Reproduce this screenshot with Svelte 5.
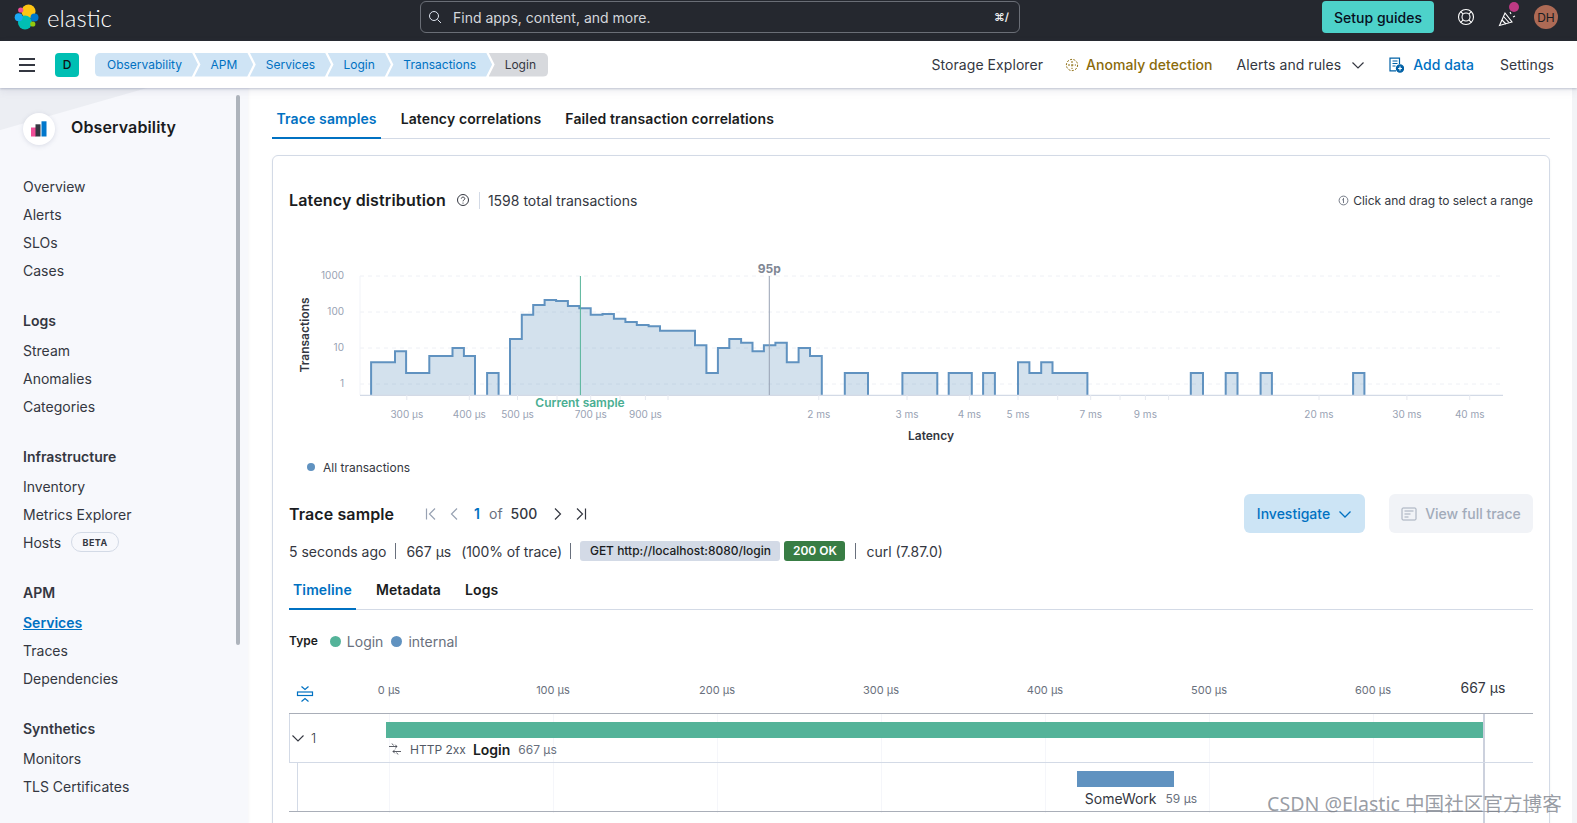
<script>
  const crumbs = ['Observability', 'APM', 'Services', 'Login', 'Transactions', 'Login'];
  const nav = [
    { items: ['Overview', 'Alerts', 'SLOs', 'Cases'] },
    { title: 'Logs', items: ['Stream', 'Anomalies', 'Categories'] },
    { title: 'Infrastructure', items: ['Inventory', 'Metrics Explorer', 'Hosts'] },
    { title: 'APM', items: ['Services', 'Traces', 'Dependencies'] },
    { title: 'Synthetics', items: ['Monitors', 'TLS Certificates'] }
  ];
  const BASE = 395.3;
  const lx = (p) => 280 + p / 2.8;
  const rx = (p) => 800 + p / 2.119;
  const yy = (p) => 250 + p / 3;
  const shape = (points, fx) => {
    let d = `M${fx(points[0][0]).toFixed(1)} ${BASE}`;
    for (let i = 0; i < points.length - 1; i++) {
      const y = yy(points[i][1]).toFixed(1);
      d += ` V${y} H${fx(points[i + 1][0]).toFixed(1)}`;
    }
    return d + ` V${BASE}`;
  };
  const blocks = [
    shape([[255,337],[322,304],[353,369],[418,318],[483,294],[515,318],[546,0]], lx),
    shape([[580,369],[612,0]], lx),
    shape([[644,267],[677,194],[709,165],[741,150],[773,153],[806,168],[838,175],[870,194],[903,192],[935,206],[967,216],[999,225],[1032,229],[1064,242],[1162,286],[1194,369],[1226,294],[1258,267],[1291,278],[1323,304],[1355,286],[1387,278],[1419,337],[1452,294],[1484,318],[1517,0]], lx),
    shape([[95,369],[144,0]], rx),
    shape([[217,369],[291,0]], rx),
    shape([[315,369],[364,0]], rx),
    shape([[388,369],[413,0]], rx),
    shape([[462,337],[486,369],[511,337],[535,369],[609,0]], rx),
    shape([[828,369],[854,0]], rx),
    shape([[902,369],[927,0]], rx),
    shape([[976,369],[1000,0]], rx),
    shape([[1172,369],[1196,0]], rx)
  ];
  const xLabels = [
    [406.8,'300 µs'],[469.3,'400 µs'],[517.5,'500 µs'],[590.7,'700 µs'],[645.4,'900 µs'],
    [818.8,'2 ms'],[907,'3 ms'],[969.4,'4 ms'],[1018,'5 ms'],[1090.7,'7 ms'],[1145.4,'9 ms'],
    [1319,'20 ms'],[1406.9,'30 ms'],[1469.7,'40 ms']
  ];
  const extraTicks = [557, 620, 668, 1057.7, 1120, 1168.6];
  const yLabels = [[276,'1000'],[312,'100'],[348,'10'],[384,'1']];
  const axis = [0,100,200,300,400,500,600];
  const US = 164 / 100;
</script>

<div class="page">
  <header class="top">
    <div class="brand">
      <svg class="logo" width="26" height="28" viewBox="14 3 26 28">
        <circle cx="28.5" cy="11.5" r="7" fill="#fec514"/>
        <circle cx="25" cy="22.5" r="7" fill="#00bfb3"/>
        <circle cx="34.5" cy="17.5" r="4" fill="#0077cc"/>
        <circle cx="18.7" cy="17.3" r="4" fill="#1ba9f5"/>
        <circle cx="20.7" cy="10" r="2.6" fill="#f04e98"/>
        <circle cx="32.8" cy="24" r="2.6" fill="#93c90e"/>
      </svg>
      <span class="word">elastic</span>
    </div>
    <div class="search">
      <svg width="14" height="14" viewBox="0 0 14 14" fill="none" stroke="#dfe5ef" stroke-width="1">
        <circle cx="6" cy="6" r="4.5"/><path d="M9.5 9.5l3.5 3.5"/>
      </svg>
      <span class="ph">Find apps, content, and more.</span>
      <span class="kbd">⌘/</span>
    </div>
    <div class="top-right">
      <span class="setup">Setup guides</span>
      <svg class="i-help" width="18" height="18" viewBox="0 0 18 18" fill="none" stroke="#fff" stroke-width="1.1">
        <circle cx="9" cy="9" r="7.5"/><circle cx="9" cy="9" r="4"/>
        <path d="M3.7 3.7l2.5 2.5M14.3 3.7l-2.5 2.5M3.7 14.3l2.5-2.5M14.3 14.3l-2.5-2.5"/>
      </svg>
      <span class="cheer">
        <svg width="18" height="18" viewBox="0 0 18 18" fill="none" stroke="#fff" stroke-width="1.1">
          <path d="M1.5 16.5L7 4l7 9z"/><path d="M4 11l4 4M5.5 7.5l5.5 6M12 3l1 2M15 8l2-1"/>
        </svg>
        <i class="pink"></i>
      </span>
      <span class="avatar">DH</span>
    </div>
  </header>

  <div class="sub">
    <button class="burger" aria-label="menu"><i></i><i></i><i></i></button>
    <span class="tile">D</span>
    <nav class="crumbs">
      {#each crumbs as c, i}
        <span class="crumb" class:first={i === 0} class:last={i === crumbs.length - 1}>{c}</span>
      {/each}
    </nav>
    <div class="links">
      <span class="lnk se">Storage Explorer</span>
      <span class="lnk gold">
        <svg width="14" height="14" viewBox="0 0 14 14" fill="none" stroke="#8a6a0a" stroke-width="1" stroke-dasharray="2 1.4">
          <circle cx="7" cy="7" r="5.6"/><path d="M7 3v8M3 7h8"/>
        </svg>
        Anomaly detection
      </span>
      <span class="lnk alerts">Alerts and rules
        <svg width="14" height="14" viewBox="0 0 14 14" fill="none" stroke="#343741" stroke-width="1.2"><path d="M1.5 4.5L7 10l5.5-5.5"/></svg>
      </span>
      <span class="lnk add">
        <svg width="15" height="16" viewBox="0 0 15 16" fill="none" stroke="#0061a6" stroke-width="1.2">
          <path d="M10.5 7V1.2H1v12.6h6"/><path d="M3.5 4h5M3.5 6.5h5M3.5 9h3"/>
          <circle cx="11" cy="11.5" r="3.6" fill="#0061a6"/><path d="M11 9.6v3.8M9.1 11.5h3.8" stroke="#fff"/>
        </svg>
        Add data
      </span>
      <span class="lnk">Settings</span>
    </div>
  </div>

  <div class="body">
    <aside class="side">
      <div class="thumb"></div>
      <div class="side-head">
        <span class="obs-icon">
          <svg width="16" height="16" viewBox="0 0 16 16">
            <rect x="0" y="6.5" width="5" height="9" fill="#f04e98"/>
            <rect x="4.5" y="3.3" width="5" height="12.2" fill="#343741"/>
            <rect x="10.5" y="0.3" width="5" height="15.2" fill="#0077cc"/>
          </svg>
        </span>
        <span class="obs">Observability</span>
      </div>
      {#each nav as s}
        <section class="sec">
          {#if s.title}<h3>{s.title}</h3>{/if}
          {#each s.items as it}
            <div class="item" class:active={it === 'Services'}>
              <span>{it}</span>
              {#if it === 'Hosts'}<span class="beta">BETA</span>{/if}
            </div>
          {/each}
        </section>
      {/each}
    </aside>

    <main class="main">
      <div class="tabs big">
        <span class="tab on">Trace samples</span>
        <span class="tab">Latency correlations</span>
        <span class="tab">Failed transaction correlations</span>
      </div>

      <div class="card">
        <div class="ld-head">
          <h2>Latency distribution</h2>
          <svg class="q" width="14" height="14" viewBox="0 0 14 14" fill="none" stroke="#343741">
            <circle cx="7" cy="7" r="5.5"/><path d="M5.3 5.6C5.3 3.6 8.8 3.7 8.8 5.6 8.8 7 7 6.9 7 8.3"/><path d="M7 9.6v1"/>
          </svg>
          <span class="total">1598 total transactions</span>
          <span class="hint">
            <svg width="11" height="11" viewBox="0 0 12 12" fill="none" stroke="#69707d"><circle cx="6" cy="6" r="4.8"/><path d="M6 3.2v5.6M4.6 5.5l1.4-1.2"/></svg>
            Click and drag to select a range
          </span>
        </div>

        <svg class="chart" width="1244" height="207" viewBox="289 250 1244 207">
          {#each yLabels as [y, t]}
            <line x1="360" x2="1503" y1={y} y2={y} stroke="#eef0f5" stroke-dasharray="4 4"/>
            <text x="344" y={y + 2.5} text-anchor="end" class="tick">{t}</text>
          {/each}
          <line x1="360" x2="360" y1="276" y2="395" stroke="#f1f3f8"/>
          {#each blocks as d}
            <path {d} fill="#6092c0" fill-opacity="0.28" stroke="#6092c0" stroke-width="2"/>
          {/each}
          <line x1="360" x2="1503" y1={BASE} y2={BASE} stroke="#d3dae6" stroke-width="1.2"/>
          {#each xLabels as [x, t]}
            <line x1={x} x2={x} y1="395" y2="400" stroke="#e6e9f0"/>
            <text {x} y="418" text-anchor="middle" class="tick">{t}</text>
          {/each}
          {#each extraTicks as x}
            <line x1={x} x2={x} y1="395" y2="400" stroke="#e6e9f0"/>
          {/each}
          <line x1="580.4" x2="580.4" y1="276" y2="395" stroke="#54b399" stroke-width="1"/>
          <text x="580" y="407" text-anchor="middle" class="cur">Current sample</text>
          <line x1="769.3" x2="769.3" y1="276" y2="395" stroke="#98a2b3" stroke-width="1"/>
          <text x="769.3" y="273" text-anchor="middle" class="p95">95p</text>
          <text transform="translate(309 335) rotate(-90)" text-anchor="middle" class="axt">Transactions</text>
          <text x="931" y="440" text-anchor="middle" class="axt">Latency</text>
        </svg>

        <div class="legend"><i class="dot blue small"></i>All transactions</div>

        <div class="ts-head">
          <h2>Trace sample</h2>
          <div class="pager">
            <svg width="14" height="14" viewBox="0 0 14 14" fill="none" stroke="#98a2b3" stroke-width="1.2"><path d="M2.5 1.5v11M11 1.5L5.5 7l5.5 5.5"/></svg>
            <svg class="p2" width="14" height="14" viewBox="0 0 14 14" fill="none" stroke="#98a2b3" stroke-width="1.2"><path d="M10 1.5L4.5 7l5.5 5.5"/></svg>
            <span class="pn">1</span><span class="pof">of</span><span class="pt">500</span>
            <svg class="p3" width="14" height="14" viewBox="0 0 14 14" fill="none" stroke="#343741" stroke-width="1.2"><path d="M4 1.5L9.5 7 4 12.5"/></svg>
            <svg class="p4" width="14" height="14" viewBox="0 0 14 14" fill="none" stroke="#343741" stroke-width="1.2"><path d="M3 1.5L8.5 7 3 12.5M11.5 1.5v11"/></svg>
          </div>
          <div class="actions">
            <span class="btn inv">Investigate
              <svg width="14" height="14" viewBox="0 0 14 14" fill="none" stroke="#0071c2" stroke-width="1.3"><path d="M1.5 4.5L7 10l5.5-5.5"/></svg>
            </span>
            <span class="btn vft">
              <svg width="16" height="16" viewBox="0 0 16 16" fill="none" stroke="#a2abba"><rect x="1" y="2" width="14" height="12" rx="1"/><path d="M3.5 5h9M3.5 8h6M3.5 11h4"/></svg>
              View full trace
            </span>
          </div>
        </div>

        <div class="meta">
          <span>5 seconds ago</span><i class="sep"></i>
          <span>667 µs</span><span class="pct">(100% of trace)</span><i class="sep s2"></i>
          <span class="badge url">GET http://localhost:8080/login</span>
          <span class="badge ok">200 OK</span><i class="sep s3"></i>
          <span>curl (7.87.0)</span>
        </div>

        <div class="tabs small">
          <span class="tab on">Timeline</span>
          <span class="tab">Metadata</span>
          <span class="tab">Logs</span>
        </div>

        <div class="type">
          <b>Type</b>
          <i class="dot green"></i><span class="ty">Login</span>
          <i class="dot blue"></i><span class="ty">internal</span>
        </div>

        <div class="tl-axis">
          <svg class="coll" width="18" height="18" viewBox="0 0 18 18" fill="none" stroke="#0071c2" stroke-width="1.2">
            <path d="M5.5 1.5L9 4.5l3.5-3M5.5 16.5L9 13.5l3.5 3"/>
            <rect x="1.5" y="7" width="15" height="3.5"/>
          </svg>
          <div class="ticks">
            {#each axis as a}
              <span class="at" style="left:{a * US}px">{a} µs</span>
            {/each}
            <span class="at end" style="left:{667 * US}px">667 µs</span>
          </div>
        </div>

        <div class="wf">
          <div class="guides">
            {#each axis as a}<i style="left:{a * US}px"></i>{/each}
            <i class="endline" style="left:{667 * US}px"></i>
          </div>
          <div class="row r1">
            <div class="tog">
              <svg width="14" height="14" viewBox="0 0 14 14" fill="none" stroke="#343741" stroke-width="1.1"><path d="M1.5 4.5L7 10l5.5-5.5"/></svg>
              <span>1</span>
            </div>
            <div class="cell">
              <div class="bar g" style="width:{667 * US + 3}px"></div>
              <div class="lab">
                <svg width="14" height="14" viewBox="0 0 14 14" fill="none" stroke="#343741" stroke-width=".8"><path d="M1 4.5h8M7.200 2.700L9 4.500 7.200 6.300M13 9.500H5M6.800 7.700L5 9.500l1.800 1.800M4 1.500l1.500 2M8.500 10.500l1.500 2"/></svg>
                <span class="sm http">HTTP 2xx</span><b>Login</b><span class="sm dur">667 µs</span>
              </div>
            </div>
          </div>
          <div class="row r2">
            <div class="tog none"></div>
            <div class="cell">
              <div class="bar b" style="margin-left:{420 * US + 2}px;width:{59 * US}px"></div>
              <div class="lab" style="margin-left:{420 * US + 10}px">
                <span class="sw">SomeWork</span><span class="sm dur2">59 µs</span>
              </div>
            </div>
          </div>
        </div>
      </div>
    </main>
    <div class="sbar"></div>
  </div>
  <div class="mark">CSDN @Elastic 中国社区官方博客</div>
</div>

<style>
  :global(body) { margin: 0; background: #fff; }
  .page {
    position: relative; width: 1577px; height: 823px; overflow: hidden;
    font-family: Inter, "Noto Sans", sans-serif; font-size: 14px; color: #343741;
  }
  h2, h3 { margin: 0; }
  i { display: block; }

  .top { height: 41px; background: #25282f; display: flex; align-items: flex-start; box-sizing: border-box; }
  .brand { display: flex; align-items: center; width: 420px; height: 34px; padding-left: 14px; box-sizing: border-box; }
  .logo { flex: none; }
  .word { font-family: Lato, sans-serif; font-weight: 300; font-size: 24px; color: #fff; margin-left: 7px; }
  .search {
    width: 600px; height: 32px; margin-top: 1px; box-sizing: border-box;
    border: 1px solid #6a6e76; border-radius: 6px; display: flex; align-items: center; padding: 0 10px 0 7px;
  }
  .ph { margin-left: 11px; color: #d4d7dc; flex: 1; }
  .kbd { color: #eee; font-size: 11px; font-weight: 600; }
  .top-right { display: flex; align-items: center; margin-left: 302px; height: 34px; }
  .setup {
    width: 112px; height: 32px; background: #4dd2ca; border-radius: 4px; color: #07101f;
    display: flex; align-items: center; justify-content: center; font-weight: 500;
  }
  .i-help { margin-left: 23px; }
  .cheer { position: relative; margin-left: 23px; height: 18px; margin-top: 2px; }
  .pink { position: absolute; width: 10px; height: 10px; background: #bd3a83; border-radius: 50%; right: -3px; top: -7px; }
  .avatar {
    width: 24px; height: 24px; border-radius: 50%; background: #ad6a55; color: #1a1c21; font-size: 12px;
    display: flex; align-items: center; justify-content: center; margin-left: 18px;
  }

  .sub {
    position: relative; z-index: 2; height: 47px; background: #fff; display: flex; align-items: center;
    box-shadow: 0 1px 2px rgba(100,110,140,.35), 0 3px 8px rgba(100,110,140,.12);
  }
  .burger { width: 16px; margin: 0 0 0 19px; padding: 0; border: 0; background: none; display: flex; flex-direction: column; gap: 4px; }
  .burger i { height: 2px; background: #343741; }
  .tile {
    width: 24px; height: 24px; margin-left: 20px; background: #00bfb3; border-radius: 4px;
    display: flex; align-items: center; justify-content: center; font-size: 12px; font-weight: 500; color: #111;
  }
  .crumbs { display: flex; margin-left: 16px; }
  .crumb {
    height: 24px; line-height: 24px; padding: 0 16px; font-size: 12px; color: #0071c2; background: #cfe4f5; margin-left: -3.5px;
    clip-path: polygon(0 0, calc(100% - 6px) 0, 100% 50%, calc(100% - 6px) 100%, 0 100%, 6px 50%);
  }
  .crumb.first { margin-left: 0; padding-left: 12px; border-radius: 5px 0 0 5px; clip-path: polygon(0 0, calc(100% - 6px) 0, 100% 50%, calc(100% - 6px) 100%, 0 100%); }
  .crumb.last { padding-right: 12px; background: #d7d9dd; color: #343741; border-radius: 0 5px 5px 0; clip-path: polygon(0 0, 100% 0, 100% 100%, 0 100%, 6px 50%); }
  .links { margin-left: auto; display: flex; align-items: center; padding-right: 23px; letter-spacing: .06px; }
  .lnk { display: flex; align-items: center; white-space: nowrap; }
  .gold { color: #8a6a0a; font-weight: 500; margin-left: 22px; gap: 7px; }
  .alerts { margin-left: 24px; gap: 10px; }
  .add { color: #0071c2; font-weight: 500; margin-left: 24px; gap: 9px; }
  .lnk:last-child { margin-left: 26px; }

  .body { display: flex; height: 735px; }
  .side {
    position: relative; width: 248px; flex: none; box-sizing: border-box; padding: 0 0 0 23px; overflow: hidden;
    background: linear-gradient(164deg, #eceef3 0, #eceef3 40px, #f7f8fc 41px);
    box-shadow: 1px 0 2px rgba(100,110,140,.06);
  }
  .thumb { position: absolute; left: 236px; top: 7px; width: 4px; height: 550px; background: #aeb4bc; border-radius: 2px; }
  .side-head { display: flex; align-items: center; height: 32px; margin-top: 25px; margin-bottom: 27px; }
  .obs-icon {
    width: 32px; height: 32px; border-radius: 50%; background: #fff; box-shadow: 0 1px 5px rgba(100,110,140,.2);
    display: flex; align-items: center; justify-content: center;
  }
  .obs { font-size: 16px; font-weight: 600; color: #1a1c21; margin-left: 16px; margin-top: -4px; letter-spacing: .12px; }
  .sec { margin-bottom: 23px; }
  h3 { font-size: 14px; font-weight: 600; height: 28px; line-height: 28px; margin-bottom: 1px; color: #343741; }
  .item { height: 28px; display: flex; align-items: center; }
  .item.active { color: #0071c2; font-weight: 600; text-decoration: underline; }
  .beta {
    margin-left: 10px; width: 48px; height: 20px; box-sizing: border-box; border: 1px solid #d3dae6; border-radius: 10px;
    font-size: 9px; font-weight: 700; letter-spacing: .4px; display: flex; align-items: center; justify-content: center;
  }

  .main { flex: 1; box-sizing: border-box; padding: 10px 22px 0 24px; min-width: 0; overflow: hidden; }
  .sbar { width: 5px; flex: none; background: #f3f4f7; }
  .tabs { display: flex; gap: 15px; border-bottom: 1px solid #d3dae6; font-weight: 600; color: #1a1c21; letter-spacing: .12px; }
  .tab { padding: 0 4.5px; position: relative; display: flex; align-items: center; white-space: nowrap; }
  .tabs.big .tab { height: 40px; }
  .tabs.small { gap: 16px; }
  .tabs.small .tab { height: 39px; padding: 0 4px; }
  .tab.on { color: #0071c2; }
  .tab.on::after { content: ''; position: absolute; left: 0; right: 0; bottom: -1px; height: 2px; background: #0071c2; }

  .card {
    margin-top: 16px; border: 1px solid #d3dae6; border-radius: 6px; padding: 32px 16px 0; height: 700px; box-sizing: border-box;
    box-shadow: 0 1px 3px rgba(100,110,140,.08);
  }
  .ld-head { display: flex; align-items: center; height: 24px; }
  h2 { font-size: 16px; font-weight: 600; color: #1a1c21; letter-spacing: .15px; }
  .q { margin-left: 10px; }
  .total { margin-left: 9px; padding-left: 8px; border-left: 1px solid #d3dae6; }
  .hint { margin-left: auto; font-size: 12px; display: flex; align-items: center; gap: 4px; }
  .chart { display: block; margin-top: 38px; font-family: Inter, sans-serif; }
  .tick { font-size: 10px; fill: #98a2b3; }
  .cur { font-size: 12px; font-weight: 600; fill: #4aae92; }
  .p95 { font-size: 12px; font-weight: 700; fill: #7f8794; }
  .axt { font-size: 12px; font-weight: 600; fill: #343741; }

  .legend { height: 20px; display: flex; align-items: center; font-size: 12px; padding-left: 18px; gap: 8px; }
  .dot { width: 11px; height: 11px; border-radius: 50%; flex: none; }
  .dot.small { width: 8px; height: 8px; }
  .dot.blue { background: #6092c0; }
  .dot.green { background: #54b399; }

  .ts-head { display: flex; align-items: center; height: 39px; margin-top: 17px; }
  .ts-head h2 { letter-spacing: .1px; }
  .pager { display: flex; align-items: center; margin-left: 30px; }
  .p2 { margin-left: 9px; }
  .pn { margin-left: 13px; color: #0071c2; font-weight: 600; }
  .pof { margin-left: 9px; color: #69707d; }
  .pt { margin-left: 8px; font-weight: 500; }
  .p3 { margin-left: 14px; }
  .p4 { margin-left: 9px; }
  .actions { margin-left: auto; display: flex; gap: 24px; }
  .btn { height: 39px; border-radius: 6px; display: flex; align-items: center; justify-content: center; font-weight: 500; box-sizing: border-box; }
  .inv { width: 121px; background: #cce4f5; color: #0071c2; gap: 8px; }
  .vft { width: 144px; background: #f1f3f7; color: #a2abba; gap: 8px; }

  .meta { display: flex; align-items: center; height: 20px; margin-top: 8px; }
  .sep { width: 1px; height: 16px; background: #69707d; margin: 0 10px 0 9px; }
  .s2 { margin-right: 9px; margin-left: 8.5px; }
  .s3 { margin-right: 10px; margin-left: 10px; }
  .pct { margin-left: 10px; letter-spacing: -.12px; }
  .badge { height: 20px; line-height: 20px; border-radius: 3px; font-size: 12px; font-weight: 500; text-align: center; box-sizing: border-box; }
  .url { width: 200px; background: #d3dae6; color: #1a1c21; }
  .ok { width: 61px; background: #387d44; color: #fff; margin-left: 4px; font-weight: 600; }

  .tabs.small { margin-top: 9px; }
  .type { display: flex; align-items: center; height: 20px; margin-top: 21px; }
  .type b { font-size: 12px; font-weight: 600; margin-right: 12px; margin-top: -1px; color: #1a1c21; }
  .ty { color: #69707d; margin-left: 6px; }
  .type .dot + .ty + .dot { margin-left: 8px; }

  .tl-axis { display: flex; height: 33px; margin-top: 29px; align-items: flex-start; }
  .coll { margin-left: 7px; margin-top: 5px; flex: none; }
  .ticks { position: relative; margin-left: 75px; }
  .at { position: absolute; top: 2px; transform: translateX(-50%); font-size: 11px; color: #69707d; white-space: nowrap; line-height: 16px; }
  .at.end { font-size: 14px; color: #343741; top: 0; }

  .wf { position: relative; border-top: 1.5px solid #a9aeb8; }
  .guides { position: absolute; left: 100px; top: 0; bottom: -1px; }
  .guides i { position: absolute; top: 0; bottom: 0; width: 1px; background: #f5f6fa; }
  .guides .endline { width: 2px; background: #ccd1dd; height: 120px; bottom: auto; }
  .row { display: flex; position: relative; box-sizing: border-box; }
  .r1 { height: 49px; border-bottom: 1px solid #d3dae6; border-left: 1px solid #d3dae6; }
  .r2 { height: 48.5px; border-bottom: 1.5px solid #a9aeb8; }
  .tog { width: 96px; flex: none; display: flex; align-items: center; padding-left: 1px; gap: 6px; box-sizing: border-box; font-size: 13px; font-weight: 300; }
  .tog.none { border-left: 1px solid #d3dae6; margin-left: 8px; width: 89px; }
  .cell { padding-top: 8px; min-width: 0; }
  .bar { height: 16px; }
  .bar.g { background: #54b399; }
  .bar.b { background: #6092c0; }
  .lab { display: flex; align-items: center; height: 18px; margin-top: 2px; white-space: nowrap; }
  .lab svg { margin-left: 2px; }
  .sm { font-size: 12px; color: #69707d; }
  .http { margin-left: 8px; color: #535966; }
  .lab b { font-weight: 600; color: #1a1c21; margin-left: 7px; margin-top: 1px; }
  .dur { margin-left: 8px; }
  .sw { color: #343741; }
  .dur2 { margin-left: 9px; }

  .mark {
    position: absolute; left: 1267px; top: 791px; font-family: "Noto Sans", "Noto Sans CJK SC", sans-serif;
    font-size: 19.6px; color: rgba(120,125,135,.75); white-space: nowrap; line-height: 26px;
  }
</style>
